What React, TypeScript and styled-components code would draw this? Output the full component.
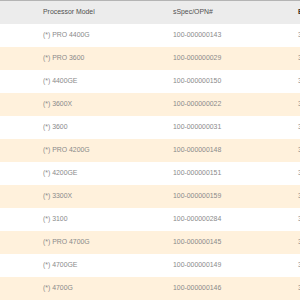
import React from "react";
import styled, { createGlobalStyle } from "styled-components";

const GlobalStyle = createGlobalStyle`
  html, body {
    margin: 0;
    padding: 0;
    background: #ffffff;
  }
  body {
    font-family: "Liberation Sans", Arial, sans-serif;
  }
`;

const Table = styled.div`
  width: 300px;
  overflow: hidden;
  border-top: 1px solid #b4b4b4;
`;

const Row = styled.div<{ $tone: "head" | "plain" | "cream" }>`
  display: grid;
  grid-template-columns: 43px 130px 125px 200px;
  align-items: center;
  height: 23px;
  background: ${(p) =>
    p.$tone === "head" ? "#ececec" : p.$tone === "cream" ? "#fff1dc" : "#ffffff"};
  color: ${(p) => (p.$tone === "head" ? "#505050" : "#8a8a8a")};
  font-size: 6.9px;
  line-height: 1;
  white-space: nowrap;
`;

const Cell = styled.div<{ $strong?: boolean }>`
  overflow: visible;
  color: ${(p) => (p.$strong ? "#3a2c20" : "inherit")};
  font-weight: ${(p) => (p.$strong ? 700 : 400)};
`;

const rows = [
  ["(*) PRO 4400G", "100-000000143"],
  ["(*) PRO 3600", "100-000000029"],
  ["(*) 4400GE", "100-000000150"],
  ["(*) 3600X", "100-000000022"],
  ["(*) 3600", "100-000000031"],
  ["(*) PRO 4200G", "100-000000148"],
  ["(*) 4200GE", "100-000000151"],
  ["(*) 3300X", "100-000000159"],
  ["(*) 3100", "100-000000284"],
  ["(*) PRO 4700G", "100-000000145"],
  ["(*) 4700GE", "100-000000149"],
  ["(*) 4700G", "100-000000146"],
];

export default function App() {
  return (
    <>
      <GlobalStyle />
      <Table>
        <Row $tone="head">
          <Cell />
          <Cell>Processor Model</Cell>
          <Cell>sSpec/OPN#</Cell>
          <Cell $strong>BIOS</Cell>
        </Row>
        {rows.map(([model, spec], i) => (
          <Row key={spec} $tone={i % 2 === 0 ? "plain" : "cream"}>
            <Cell />
            <Cell>{model}</Cell>
            <Cell>{spec}</Cell>
            <Cell>3.80</Cell>
          </Row>
        ))}
      </Table>
    </>
  );
}
